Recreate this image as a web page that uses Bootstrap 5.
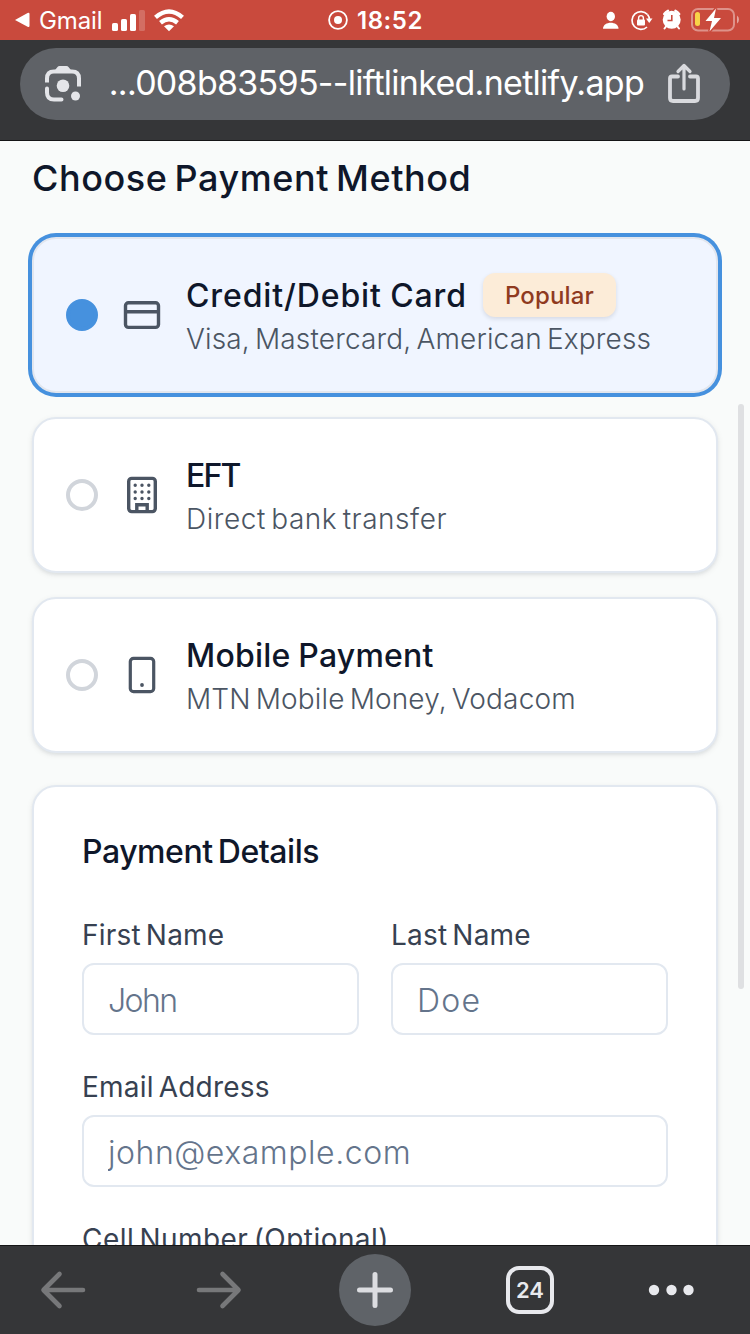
<!DOCTYPE html>
<html lang="en">
<head>
<meta charset="utf-8">
<meta name="viewport" content="width=device-width, initial-scale=1">
<title>Choose Payment Method</title>
<link href="https://cdn.jsdelivr.net/npm/bootstrap@5.3.0/dist/css/bootstrap.min.css" rel="stylesheet">
<style>
  body { font-family: Inter, "Liberation Sans", sans-serif; background: #f9fbfa; color: #0f172a; }
  .phone { width: 750px; height: 1334px; }
  svg { display: block; flex: none; }

  .status-bar { height: 40px; background: #c94a3d; color: #fff; font-size: 24px; line-height: 40px; }
  .status-side { flex: 1 1 0; min-width: 0; }
  .back-arrow { margin-left: 14px; }
  .back-app { letter-spacing: -.1px; padding: 1px 0 0 1px; }
  .clock { font-weight: 600; letter-spacing: .6px; padding-top: 1px; }

  .url-bar { height: 101px; background: #353638; border-bottom: 1px solid #151516; padding: 8px 20px 20px; }
  .url-pill { height: 72px; background: #5f6267; color: #fff; padding: 0 28px 0 24px; }
  .url-text { font-size: 34px; line-height: 70px; height: 72px; letter-spacing: -.72px; white-space: nowrap; margin: 0 22px 0 auto; }

  .page-view { padding: 17px 32px 0; }
  .page-title { font-size: 36px; line-height: 40px; font-weight: 500; margin: 0 0 39px; }
  .pay-card, .details { border: 2px solid #e2e8f0; border-radius: 24px; background: #fff; box-shadow: 0 2px 6px rgba(15,23,42,.08), 0 2px 3px rgba(15,23,42,.05); }
  .pay-card { height: 156px; padding: 3px 32px 0; }
  .pay-card > svg, .radio-dot { margin-top: -3px; }
  .pay-card.selected { background: #f0f5ff; border-color: #e2e6ee; box-shadow: 0 0 0 4px #4691de; }
  .radio-dot { width: 32px; height: 32px; border: 4px solid #d1d5db; border-radius: 50%; flex: none; }
  .selected .radio-dot { background: #4691de; border-color: #4691de; }
  .pay-name { font-size: 32px; line-height: 41px; height: 44px; font-weight: 500; }
  .pay-note { font-size: 28px; line-height: 41px; height: 40px; color: #4b5563; font-weight: 300; white-space: nowrap; word-spacing: -3px; }
  .tag-popular { height: 44px; line-height: 46px; margin: -4px 0 0 16px; padding: 0 22px; border-radius: 12px; background: #fcecd8; color: #8f3a1f; font-size: 24px; font-weight: 500; letter-spacing: .15px; box-shadow: 0 2px 4px rgba(15,23,42,.12); }

  .details { padding: 43px 48px 0; height: 560px; margin-top: 32px; }
  .details-title { font-size: 32px; line-height: 44px; font-weight: 500; margin: 0 0 41px; }
  .field-label { display: block; font-size: 28px; line-height: 40px; color: #374151; margin-bottom: 8px; white-space: nowrap; word-spacing: -3px; letter-spacing: .2px; }
  .field-row { gap: 32px; margin-bottom: 32px; }
  .form-control.field-input { height: 72px; border: 2px solid #e2e8f0; border-radius: 12px; font-size: 32px; padding: 2px 24px 0; background: #fff; font-weight: 300; }
  .field-input::placeholder { color: #64748b; opacity: 1; }
  .scroll-thumb { right: 6px; top: 263px; width: 6px; height: 585px; border-radius: 3px; background: #dfe0e2; }

  .tool-bar { display: grid; grid-template-columns: 141px 156px 156px 154px 128px; align-items: center; justify-items: center; height: 89px; background: #353638; border-top: 1px solid #151516; }
  .new-tab { width: 72px; height: 72px; background: #5f6368; }
  .tab-count { width: 48px; height: 48px; border: 4px solid #e8e9ed; border-radius: 13px; color: #e8e9ed; font-size: 22px; font-weight: 600; }

  .ls-title { letter-spacing: .55px; word-spacing: -3px; }
  .ls-card { letter-spacing: .88px; word-spacing: -1px; }
  .ls-visa { letter-spacing: .16px; }
  .ls-eft { letter-spacing: -1.8px; }
  .ls-direct { letter-spacing: .55px; }
  .ls-mobile { letter-spacing: .22px; word-spacing: -1px; }
  .ls-mtn { letter-spacing: .15px; }
  .ls-details { letter-spacing: -.45px; word-spacing: -3px; }
  .ls-cell { letter-spacing: .45px; }
  .ls-john { letter-spacing: -1.6px; }
  .ls-doe { letter-spacing: 1.3px; }
  .ls-mail { letter-spacing: .53px; }
</style>
</head>
<body>
<div class="phone d-flex flex-column overflow-hidden">

  <header class="status-bar d-flex flex-shrink-0 align-items-center">
    <div class="status-side d-flex align-items-center">
      <svg class="back-arrow" width="16" height="18" viewBox="0 0 16 18"><path d="M1 9L13.600 2Q15.500 1.300 15.500 3V14.800Q15.500 16.600 13.600 15.800Z" fill="#fff"/></svg>
      <span class="back-app ms-2">Gmail</span>
      <svg class="ms-2" width="34" height="24" viewBox="0 0 34 24" fill="#fff"><rect x="1" y="15" width="6" height="8" rx="1.6"/><rect x="10" y="11" width="6" height="12" rx="1.6"/><rect x="19" y="6" width="6" height="17" rx="1.6"/><rect x="28" y="2" width="6" height="21" rx="1.6" opacity=".2"/></svg>
      <svg class="ms-2" width="32" height="24" viewBox="0 0 32 24" fill="none" stroke="#fff" stroke-width="4.400"><path d="M2.500 9.400Q16 -2.400 29.500 9.400"/><path d="M7.500 14.700Q16 7.700 24.500 14.700"/><path d="M11 18.300Q16 14.500 21 18.300L16 23.300Z" fill="#fff" stroke="none"/></svg>
    </div>
    <div class="d-flex align-items-center gap-2">
      <svg width="22" height="22" viewBox="0 0 22 22"><circle cx="11" cy="11" r="8.900" fill="none" stroke="#fff" stroke-width="1.800"/><circle cx="11" cy="11" r="4" fill="#fff"/></svg>
      <span class="clock">18:52</span>
    </div>
    <div class="status-side d-flex justify-content-end">
      <svg width="150" height="40" viewBox="600 0 150 40">
        <g fill="#fff"><ellipse cx="610.800" cy="16.500" rx="4.200" ry="4.700"/><path d="M603 28.800C603 20.800 618.500 20.800 618.500 28.800Z"/></g>
        <path d="M647.500 14.500A8.900 8.900 0 1 0 647 27" fill="none" stroke="#fff" stroke-width="1.700"/><path d="M647.500 14.500Q649.500 17 649.500 19.500" fill="none" stroke="#fff" stroke-width="1.700"/>
        <path d="M646 18.500H652.500L649.200 23Z" fill="#fff"/>
        <rect x="637" y="19.500" width="8" height="6" rx="1" fill="#fff"/><path d="M638.600 20V18a2.400 2.400 0 0 1 4.800 0v2" fill="none" stroke="#fff" stroke-width="1.400"/>
        <circle cx="671.700" cy="19.800" r="9" fill="#fff"/><path d="M664.200 14A12 12 0 0 1 668 10.800M675.400 10.800A12 12 0 0 1 679.200 14" stroke="#fff" stroke-width="2.400" fill="none" stroke-linecap="round"/><path d="M666 26.500L664.500 28.500M677.500 26.500L679 28.500" stroke="#fff" stroke-width="2" stroke-linecap="round"/><path d="M671.800 15V20.500H667.500" stroke="#c94a3d" stroke-width="1.600" fill="none"/>
        <rect x="692" y="9" width="42" height="21.500" rx="6" fill="none" stroke="#fff" stroke-opacity=".4" stroke-width="2"/><path d="M737 15.500Q739 17 739 19.500T737 23.500Z" fill="#fff" fill-opacity=".5"/><rect x="695" y="12" width="5" height="14" rx="2.500" fill="#f8d448"/>
        <path d="M716 8.500L705.500 21H712L709.500 31.500L721 18H714Z" fill="#fff" stroke="#c94a3d" stroke-width="3" paint-order="stroke"/>
      </svg>
    </div>
  </header>

  <nav class="url-bar flex-shrink-0">
    <div class="url-pill rounded-pill d-flex align-items-center">
      <svg width="38" height="38" viewBox="0 0 38 38" fill="none" stroke="#e4e5e9" stroke-width="4"><path d="M3 17.500V13.500Q3 6.500 10 6.500H28Q35 6.500 35 13.500V21.500"/><path d="M3 23.500V27.500Q3 34.500 10 34.500H17.500" stroke-linecap="round"/><path d="M9.500 7L13.500 2Q14.200 1 15.500 1H22.500Q23.800 1 24.500 2L28.500 7Z" fill="#e4e5e9" stroke="none"/><circle cx="19" cy="20.700" r="6.300" fill="#e4e5e9" stroke="none"/><circle cx="31.500" cy="31" r="4.500" fill="#e4e5e9" stroke="none"/></svg>
      <span class="url-text">...008b83595--liftlinked.netlify.app</span>
      <svg width="36" height="42" viewBox="0 0 36 42" fill="none" stroke="#d9dade" stroke-width="3.800" stroke-linecap="round" stroke-linejoin="round"><path d="M12 13.500H6Q4 13.500 4 15.500V35Q4 38 7 38H29Q32 38 32 35V15.500Q32 13.500 30 13.500H24"/><path d="M18 26V3M12 8.500L18 2.500L24 8.500" stroke-width="3.200"/></svg>
    </div>
  </nav>

  <main class="page-view flex-grow-1 position-relative overflow-hidden">
    <h1 class="page-title ls-title">Choose Payment Method</h1>

    <section class="d-flex flex-column gap-4">
      <div class="pay-card selected d-flex align-items-center gap-4">
        <span class="radio-dot"></span>
        <svg width="40" height="40" viewBox="0 0 40 40" fill="none" stroke="#4b5563" stroke-width="3.400"><rect x="3.500" y="7.800" width="33" height="24.600" rx="3"/><path d="M3.500 16.700H36.500"/></svg>
        <div>
          <div class="d-flex align-items-center"><span class="pay-name ls-card text-nowrap">Credit/Debit Card</span><span class="tag-popular">Popular</span></div>
          <div class="pay-note ls-visa">Visa, Mastercard, American Express</div>
        </div>
      </div>

      <div class="pay-card d-flex align-items-center gap-4">
        <span class="radio-dot"></span>
        <svg width="40" height="40" viewBox="0 0 40 40" fill="none" stroke="#4b5563" stroke-width="3.400"><rect x="6.700" y="3.400" width="26.600" height="33.200" rx="3"/><path d="M14.800 36V29.800H25.200V36"/><path d="M13.200 10.200h.01M20 10.200h.01M26.800 10.200h.01M13.200 17h.01M20 17h.01M26.800 17h.01M13.200 23.500h.01M20 23.500h.01M26.800 23.500h.01" stroke-linecap="round"/></svg>
        <div>
          <div class="pay-name ls-eft">EFT</div>
          <div class="pay-note ls-direct">Direct bank transfer</div>
        </div>
      </div>

      <div class="pay-card d-flex align-items-center gap-4">
        <span class="radio-dot"></span>
        <svg width="40" height="40" viewBox="0 0 40 40" fill="none" stroke="#4b5563" stroke-width="3.200"><rect x="8.300" y="3.400" width="23.400" height="33.200" rx="3.200"/><path d="M20 30h.01" stroke-linecap="round" stroke-width="3.800"/></svg>
        <div>
          <div class="pay-name ls-mobile">Mobile Payment</div>
          <div class="pay-note ls-mtn">MTN Mobile Money, Vodacom</div>
        </div>
      </div>
    </section>

    <form class="details">
      <h2 class="details-title ls-details">Payment Details</h2>
      <div class="field-row d-flex">
        <div class="flex-fill w-50"><label class="field-label" for="first">First Name</label><input id="first" class="form-control field-input ls-john" placeholder="John"></div>
        <div class="flex-fill w-50"><label class="field-label" for="last">Last Name</label><input id="last" class="form-control field-input ls-doe" placeholder="Doe"></div>
      </div>
      <div class="field-row d-flex">
        <div class="flex-fill"><label class="field-label" for="email">Email Address</label><input id="email" class="form-control field-input ls-mail" placeholder="john@example.com"></div>
      </div>
      <label class="field-label ls-cell">Cell Number (Optional)</label>
    </form>
    <div class="scroll-thumb position-absolute"></div>
  </main>

  <footer class="tool-bar flex-shrink-0">
    <svg class="me-auto" width="126" height="72" viewBox="0 0 126 72" fill="none" stroke="#77787a" stroke-width="4.600" stroke-linecap="round" stroke-linejoin="round"><path d="M83 36H44M59.500 20L43.500 36L59.500 52"/></svg>
    <svg width="126" height="72" viewBox="0 0 126 72" fill="none" stroke="#77787a" stroke-width="4.600" stroke-linecap="round" stroke-linejoin="round"><path d="M43 36H82M66.500 20L82.500 36L66.500 52"/></svg>
    <div class="new-tab rounded-circle d-flex align-items-center justify-content-center">
      <svg width="36" height="36" viewBox="0 0 36 36" stroke="#dcdde1" stroke-width="5" stroke-linecap="round"><path d="M18 2.500V33.500M2.500 18H33.500"/></svg>
    </div>
    <div class="tab-count d-flex align-items-center justify-content-center">24</div>
    <svg width="46" height="12" viewBox="0 0 46 12" fill="#e8e9ed"><circle cx="6" cy="6" r="5.200"/><circle cx="23.500" cy="6" r="5.200"/><circle cx="40.500" cy="6" r="5.200"/></svg>
  </footer>
</div>
<script src="https://cdn.jsdelivr.net/npm/bootstrap@5.3.0/dist/js/bootstrap.bundle.min.js"></script>
</body>
</html>
